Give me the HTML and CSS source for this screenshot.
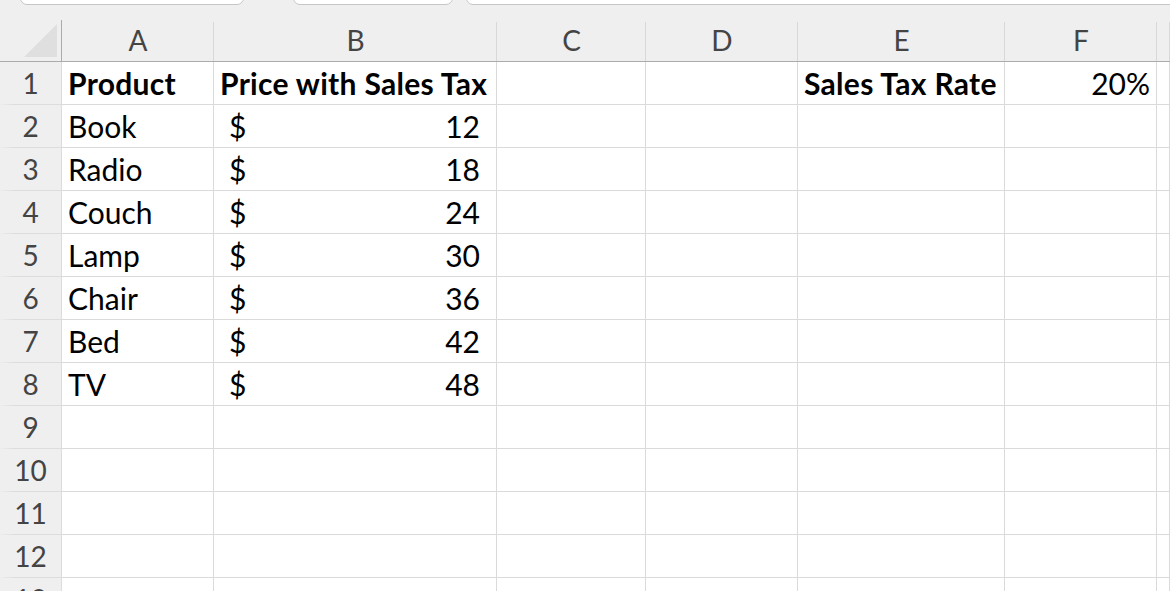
FILE: index.html
```html
<!DOCTYPE html>
<html lang="en">
<head>
  <meta charset="UTF-8">
  <title>Sales Tax</title>
  <link rel="stylesheet" href="styles.css">
</head>
<body>

<div class="toolbar">
  <div class="tab tab-name"></div>
  <div class="tab tab-fx"></div>
  <div class="tab tab-formula"></div>
</div>

<div class="sheet">
  <!-- column headers -->
  <div class="corner"><div class="select-all"></div></div>
  <div class="col-head">A</div>
  <div class="col-head">B</div>
  <div class="col-head">C</div>
  <div class="col-head">D</div>
  <div class="col-head">E</div>
  <div class="col-head">F</div>
  <div class="col-head"></div>

  <div class="row-head">1</div>
  <div class="cell bold">Product</div>
  <div class="cell bold">Price with Sales Tax</div>
  <div class="cell"></div>
  <div class="cell"></div>
  <div class="cell bold">Sales Tax Rate</div>
  <div class="cell num">20%</div>
  <div class="cell"></div>

  <div class="row-head">2</div>
  <div class="cell">Book</div>
  <div class="cell money"><span>$</span><span>12</span></div>
  <div class="cell"></div><div class="cell"></div><div class="cell"></div><div class="cell"></div><div class="cell"></div>

  <div class="row-head">3</div>
  <div class="cell">Radio</div>
  <div class="cell money"><span>$</span><span>18</span></div>
  <div class="cell"></div><div class="cell"></div><div class="cell"></div><div class="cell"></div><div class="cell"></div>

  <div class="row-head">4</div>
  <div class="cell">Couch</div>
  <div class="cell money"><span>$</span><span>24</span></div>
  <div class="cell"></div><div class="cell"></div><div class="cell"></div><div class="cell"></div><div class="cell"></div>

  <div class="row-head">5</div>
  <div class="cell">Lamp</div>
  <div class="cell money"><span>$</span><span>30</span></div>
  <div class="cell"></div><div class="cell"></div><div class="cell"></div><div class="cell"></div><div class="cell"></div>

  <div class="row-head">6</div>
  <div class="cell">Chair</div>
  <div class="cell money"><span>$</span><span>36</span></div>
  <div class="cell"></div><div class="cell"></div><div class="cell"></div><div class="cell"></div><div class="cell"></div>

  <div class="row-head">7</div>
  <div class="cell">Bed</div>
  <div class="cell money"><span>$</span><span>42</span></div>
  <div class="cell"></div><div class="cell"></div><div class="cell"></div><div class="cell"></div><div class="cell"></div>

  <div class="row-head">8</div>
  <div class="cell">TV</div>
  <div class="cell money"><span>$</span><span>48</span></div>
  <div class="cell"></div><div class="cell"></div><div class="cell"></div><div class="cell"></div><div class="cell"></div>

  <div class="row-head">9</div>
  <div class="cell"></div><div class="cell"></div><div class="cell"></div><div class="cell"></div><div class="cell"></div><div class="cell"></div><div class="cell"></div>

  <div class="row-head">10</div>
  <div class="cell"></div><div class="cell"></div><div class="cell"></div><div class="cell"></div><div class="cell"></div><div class="cell"></div><div class="cell"></div>

  <div class="row-head">11</div>
  <div class="cell"></div><div class="cell"></div><div class="cell"></div><div class="cell"></div><div class="cell"></div><div class="cell"></div><div class="cell"></div>

  <div class="row-head">12</div>
  <div class="cell"></div><div class="cell"></div><div class="cell"></div><div class="cell"></div><div class="cell"></div><div class="cell"></div><div class="cell"></div>

  <div class="row-head">13</div>
  <div class="cell"></div><div class="cell"></div><div class="cell"></div><div class="cell"></div><div class="cell"></div><div class="cell"></div><div class="cell"></div>
</div>

</body>
</html>
```

FILE: styles.css
```css
body {
  margin: 0;
  width: 1170px;
  height: 591px;
  overflow: hidden;
  background-color: #fff;
  font-family: Lato, "Open Sans", sans-serif;
}

.toolbar {
  display: flex;
  height: 20px;
  overflow: hidden;
  background-color: #efefef;
}

.tab {
  height: 14px;
  margin-top: -11px;
  background-color: #fff;
  border: 1px solid #c6c6c6;
  border-radius: 7px;
}

.tab-name {
  width: 222px;
  margin-left: 20px;
}

.tab-fx {
  width: 158px;
  margin-left: 49px;
}

.tab-formula {
  flex: 1;
  margin-left: 13px;
  margin-right: -10px;
}

.sheet {
  display: grid;
  grid-template-columns: 62px 152px 283px 149px 152px 207px 152px 1fr;
  grid-template-rows: 42px;
  grid-auto-rows: 43px;
  font-size: 28px;
}

.corner, .col-head {
  background-color: #efefef;
  border-bottom: 1px solid #ababab;
}

.corner {
  display: flex;
  justify-content: flex-end;
  align-items: flex-end;
  padding: 4px;
  border-right: 1px solid #ababab;
}

.select-all {
  width: 33px;
  height: 33px;
  background-color: #dfdfdf;
  clip-path: polygon(100% 0, 100% 100%, 0 100%);
}

.col-head {
  line-height: 41px;
  text-align: center;
  color: #444;
  background-image: linear-gradient(#d8d8d8, #d8d8d8);
  background-size: 1px calc(100% - 2px);
  background-position: right bottom;
  background-repeat: no-repeat;
}

.row-head {
  line-height: 42px;
  text-align: center;
  color: #444;
  background-color: #efefef;
  border-right: 1px solid #ababab;
  border-bottom: 1px solid;
  border-image: linear-gradient(to right, #efefef, #dcdcdc 25%) 1;
  border-right-color: #ababab;
}

.cell {
  line-height: 42px;
  padding: 0 6px;
  font-size: 30px;
  color: #000;
  white-space: nowrap;
  border-right: 1px solid #dadada;
  border-bottom: 1px solid #dadada;
}

.bold {
  font-weight: bold;
  letter-spacing: 0.3px;
}

.num {
  text-align: right;
}

.money {
  display: flex;
  justify-content: space-between;
  padding: 0 16px 0 15px;
}
```
